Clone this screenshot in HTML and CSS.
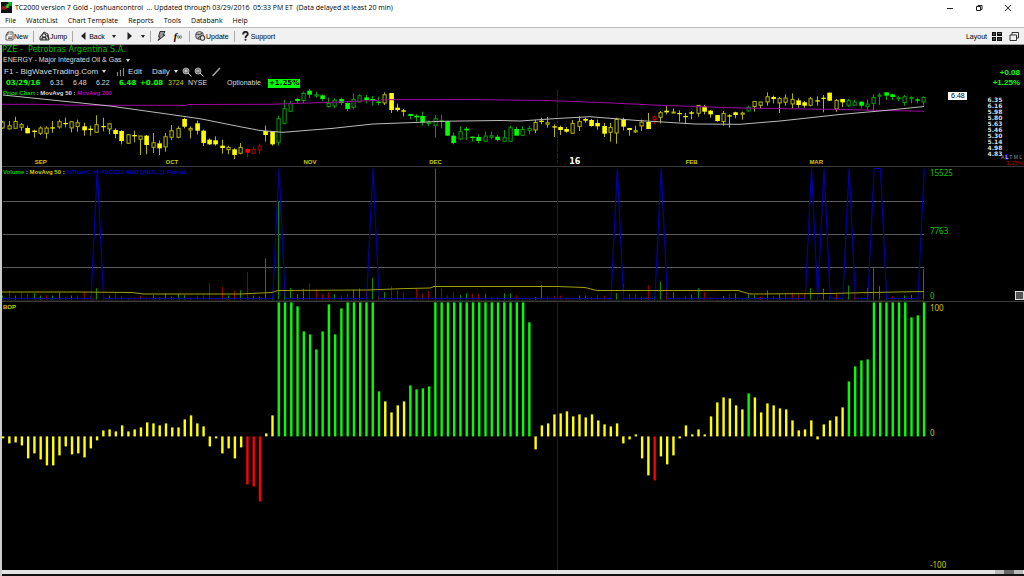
FILE: index.html
```html
<!DOCTYPE html>
<html lang="en">
<head>
<meta charset="utf-8">
<title>TC2000 version 7 Gold</title>
<link rel="stylesheet" href="styles.css">
</head>
<body>
<div class="app">
  <header class="titlebar">
    <svg class="logo" viewBox="0 0 11 11"><rect width="11" height="11" fill="#111"/><path d="M1 8V5h2v3M4 7V4h1v3" fill="none" stroke="#e02020"/><path d="M6 6V3h1v3M8 4V1h2v3" fill="none" stroke="#20e020" stroke-width="1.3"/></svg>
    <h1 class="title">TC2000 version 7 Gold - joshuancontrol &nbsp;... Updated through 03/29/2016 &nbsp;05:33 PM ET &nbsp;(Data delayed at least 20 min)</h1>
    <div class="window-buttons">
      <button aria-label="Minimize"><svg viewBox="0 0 8 8"><path d="M1 4.5h6" /></svg></button>
      <button aria-label="Restore"><svg viewBox="0 0 8 8"><path d="M1.5 2.5h4v4h-4zM3 2.500V1.500h4v4H5.500"/></svg></button>
      <button aria-label="Close"><svg viewBox="0 0 8 8"><path d="M1 1l6 6M7 1l-6 6"/></svg></button>
    </div>
  </header>
  <nav class="menu">
    <button>File</button><button>WatchList</button><button>Chart Template</button><button>Reports</button><button>Tools</button><button>Databank</button><button>Help</button>
  </nav>
  <div class="toolbar">
    <button><svg class="ico" viewBox="0 0 9 10"><path d="M3 1h5v8H1V4zM3 1v3H1M3 6h4M3 7.500h4M4.500 3H7" fill="#fff" stroke="#333" stroke-width=".8"/></svg>New</button>
    <i class="sep"></i>
    <button><svg class="ico wide" viewBox="0 0 11 10"><path d="M1 6l4-5 4 2 1 6H1z" fill="#bbb" stroke="#333"/><circle cx="5" cy="4.500" r="1.800" fill="#fff" stroke="#222"/><path d="M3 9V7l2-1 2 1v2M8 4l2 4" fill="none" stroke="#222"/></svg>Jump</button>
    <i class="sep"></i>
    <button class="back"><svg class="tri" viewBox="0 0 5 8"><path d="M4.500 0v8L0 4z" fill="#222"/></svg>Back</button>
    <button class="caret dark" aria-label="Back history"></button>
    <button class="fwd" aria-label="Forward"><svg class="tri" viewBox="0 0 5 8"><path d="M.5 0v8L5 4z" fill="#222"/></svg></button>
    <button class="caret dark" aria-label="Forward history"></button>
    <i class="sep"></i>
    <button class="bolt" aria-label="Scan"><svg class="ico" viewBox="0 0 9 10"><path d="M3 .5h5L6 4h2L1 9.500 3 6H1.500z" fill="#999" stroke="#222" stroke-width=".9"/></svg></button>
    <button class="fx" aria-label="Formula"><em>f</em><small>∞</small></button>
    <i class="sep"></i>
    <button><svg class="ico wide" viewBox="0 0 11 10"><circle cx="4.500" cy="4.500" r="4" fill="#bbb" stroke="#555"/><path d="M1 4c2-2 3 1 6-2M3 8c0-3 3-2 4-4" stroke="#333" fill="none"/><circle cx="7.500" cy="7" r="2.400" fill="#ddd" stroke="#222"/></svg>Update</button>
    <i class="sep"></i>
    <button class="support"><svg class="ico narrow" viewBox="0 0 7 10"><path d="M1.200 3.500C1 0 6 0 5.700 3.200 5.600 4.800 3.500 4.500 3.500 7" fill="none" stroke="#222" stroke-width="1.900"/><circle cx="3.500" cy="8.800" r="1" fill="#222"/></svg>Support</button>
    <div class="layout">
      <button>Layout<svg class="grid-ico" viewBox="0 0 10 9"><path d="M0 0h4v4H0zM5 0h5v4H5zM0 5h4v4H0zM5 5h5v4H5z" fill="#111"/><path d="M1 2h2M6 1.500h3M1 7h2M6 7h3" stroke="#777"/></svg></button>
      <button aria-label="Windows"><svg class="grid-ico" viewBox="0 0 10 9"><path d="M1 3h6.500v5.500H1zM3 3V.5h6.500V6H7.500" fill="none" stroke="#333"/></svg></button>
    </div>
  </div>

  <main class="work">
    <section class="info">
      <div class="symbol">PZE - &nbsp;Petrobras Argentina S.A.</div>
      <button class="sector">ENERGY - Major Integrated Oil &amp; Gas<i class="caret"></i></button>
      <div class="controls">
        <button>F1 - BigWaveTrading.Com<i class="caret"></i></button>
        <button class="edit"><svg class="bars" viewBox="0 0 8 8"><path d="M1 4v4M4 2v6M7 0v8" stroke="#888" stroke-width="1.200"/></svg>Edit</button>
        <button>Daily<i class="caret"></i></button>
        <span class="tools">
          <button aria-label="Zoom in"><svg viewBox="0 0 10 10"><circle cx="4" cy="4" r="3" fill="#777" stroke="#aaa"/><path d="M2.500 4h3M4 2.500v3M6 6l3.500 3.500" stroke="#ddd"/></svg></button>
          <button aria-label="Zoom out"><svg viewBox="0 0 10 10"><circle cx="4" cy="4" r="3" fill="#777" stroke="#aaa"/><path d="M2.500 4h3M6 6l3.500 3.500" stroke="#ddd"/></svg></button>
          <button class="pen" aria-label="Draw line"><svg viewBox="0 0 10 10"><path d="M1.500 9L9 1" stroke="#aaa" stroke-width="1.400"/></svg></button>
        </span>
      </div>
      <div class="quote">
        <b class="date">03/29/16</b><span class="cell">6.31</span><span class="cell">6.48</span><span class="cell">6.22</span><b class="last">6.48</b><b class="chg">+0.08</b><span class="vol">3724</span><span class="exch">NYSE</span><span class="opt">Optionable</span><b class="badge">+1.25%</b>
      </div>
      <div class="change">+0.08<br>+1.25%</div>
    </section>

    <section class="panes">
      <div class="pane" id="price">
        <div class="legend"><span class="g">Price Chart</span> : MovAvg 50 : <span class="m">MovAvg 200</span></div>
        <span class="month" style="left:3.200%">SEP</span>
        <span class="month" style="left:16%">OCT</span>
        <span class="month" style="left:29.500%">NOV</span>
        <span class="month" style="left:41.800%">DEC</span>
        <span class="month year" style="left:55.500%">16</span>
        <span class="month" style="left:66.900%">FEB</span>
        <span class="month" style="left:79%">MAR</span>
        <span class="tag">6.48</span>
        <div class="scale"><span>6.35</span><span>6.16</span><span>5.98</span><span>5.80</span><span>5.63</span><span>5.46</span><span>5.30</span><span>5.14</span><span>4.98</span><span>4.83</span></div>
        <div class="modes">A <mark>L</mark> T M L</div>
        <div class="pct">3.15%</div>
      </div>
      <div class="pane" id="volume">
        <div class="legend"><span class="g">Volume</span> : <span class="y">MovAvg 50</span> : <span class="b">%True(C &gt;= AVGC10 AND [ABS...]1 Period</span></div>
        <span class="axis top g">15525</span><span class="axis mid g">7763</span><span class="axis low g">0</span>
        <button class="grip" aria-label="Resize pane"></button>
      </div>
      <div class="pane" id="bop">
        <div class="legend"><span class="y">BOP</span></div>
        <span class="axis top y">100</span><span class="axis mid y">0</span><span class="axis low y">-100</span>
      </div>
    </section>
    <div class="scroll"><i class="knob"></i></div>
  </main>
</div>
<script src="charts.js"></script>
</body>
</html>
```
FILE: styles.css
```css
* { box-sizing: border-box; }
body { margin: 0; background: #000; font-family: "Open Sans", "Noto Sans", sans-serif; color: #000; }
button { margin: 0; padding: 0; border: 0; background: none; color: inherit; font: inherit; display: flex; align-items: center; white-space: nowrap; }
svg { display: block; }
.app { min-height: 100vh; display: flex; flex-direction: column; background: #fff; }

.titlebar { height: 15px; display: flex; align-items: center; padding: 0 12px 0 1px; gap: 3px; }
.logo { width: 11px; height: 11px; }
.title { flex: 1; margin: 0; font-size: 7px; font-weight: 400; line-height: 12px; white-space: nowrap; }
.window-buttons { display: flex; gap: 21px; }
.window-buttons svg { width: 8px; height: 8px; fill: none; stroke: #222; stroke-width: 1; }

.menu { height: 12px; display: flex; align-items: center; padding-left: 5px; gap: 10px; font-size: 7px; line-height: 12px; }

.toolbar { height: 18px; display: flex; align-items: center; gap: 5px; padding: 0 5px; background: #f0f0f0; border-top: 1px solid #bbb; border-bottom: 1px solid #999; font-family: "Liberation Sans", sans-serif; font-size: 7px; }
.toolbar button { flex: none; }
.ico { width: 9px; height: 10px; }
.ico.wide { width: 11px; }
.ico.narrow { width: 7px; margin-right: 2px; }
.sep { width: 1px; height: 11px; background: #aaa; }
.tri { width: 5px; height: 8px; }
.back { gap: 3px; padding-left: 3px; }
.fwd { padding: 0 2px 0 6px; }
.caret::after { content: ""; display: block; border: 2px solid transparent; border-top: 3px solid #ddd; border-bottom: 0; margin-left: 4px; }
.caret.dark::after { border-top-color: #222; margin-left: 2px; }
.bolt { padding: 0 3px 0 1px; }
.fx { padding-right: 2px; }
.support { padding-left: 2px; }
.fx em { font-family: "Liberation Serif", serif; font-weight: 700; font-size: 10px; }
.fx small { font-size: 7px; }
.layout { margin-left: auto; display: flex; gap: 7px; }
.layout button { gap: 5px; }
.grid-ico { width: 10px; height: 9px; }

.work { flex: 1; display: flex; flex-direction: column; background: #000; border-left: 2px solid #ccc; color: #ddd; font-family: "Liberation Sans", sans-serif; }
.info { position: relative; height: 43px; font-size: 8px; line-height: 10px; }
.symbol { color: #0b0; font-family: "DejaVu Sans", sans-serif; white-space: nowrap; }
.sector { padding-left: 1px; height: 10px; font-size: 7px; }
.controls { height: 13px; display: flex; align-items: center; padding-left: 2px; gap: 10px; }
.edit { gap: 3px; }
.bars { width: 9px; height: 8px; }
.tools { display: flex; gap: 2px; margin-left: -6px; }
.tools svg { width: 10px; height: 10px; }
.tools .pen { margin-left: 5px; }
.quote { display: flex; align-items: center; height: 10px; padding-left: 4px; font-size: 7px; }
.quote b { color: #0f0; font-family: "DejaVu Sans", sans-serif; }
.date { width: 44px; }
.cell { width: 23px; }
.chg, .quote .last { width: 21px; }
.chg { width: 28px; }
.vol { width: 20px; color: #cc0; }
.exch { width: 39px; }
.opt { width: 41px; }
.quote .badge { background: #0f0; color: #000; padding: 0 1px; line-height: 9px; }
.change { position: absolute; right: 4px; top: 23px; color: #0f0; font-weight: 700; font-size: 8px; text-align: right; }

.panes { flex: 1; display: grid; grid-template-rows: 78fr 135fr 269fr; }
.pane { position: relative; min-height: 0; }
.pane + .pane { border-top: 1px solid #3a3a3a; }
.pane svg { position: absolute; inset: 0; width: 100%; height: 100%; }
.legend { position: absolute; z-index: 1; left: 1px; top: 1px; font: 700 6px/8px "Liberation Sans", sans-serif; white-space: nowrap; }
.g { color: #0c0; }
.y { color: #cc0; }
.m { color: #b000b0; }
.b { color: #0000c8; }
.month { position: absolute; z-index: 1; bottom: 0; color: #cc0; font: 700 6px/8px "Liberation Sans", sans-serif; }
.month.year { color: #fff; font: 700 8px/8px "DejaVu Sans", sans-serif; }
.tag { position: absolute; z-index: 1; left: 92.600%; top: 4px; width: 19px; background: #fff; color: #000; font-size: 7px; line-height: 8px; text-align: center; }
.scale { position: absolute; z-index: 1; right: 11px; top: 9px; width: 36px; display: grid; font: 700 6px/6px "DejaVu Sans", sans-serif; text-align: center; }
.modes { position: absolute; z-index: 1; right: 2px; bottom: 6px; font-size: 5px; line-height: 5px; color: #999; }
.modes mark { background: #00f; color: #fff; }
.pct { position: absolute; z-index: 1; right: 1px; bottom: 0; font-size: 6px; line-height: 6px; color: #c00; }
.axis { position: absolute; z-index: 1; left: 90.800%; font: 8px/10px "Noto Sans", sans-serif; }
.axis.top { top: 1px; }
.axis.mid { top: 48%; transform: translateY(-50%); }
#bop .axis.mid { top: 49%; }
.axis.low { bottom: 0; }
.grip { position: absolute; z-index: 1; right: 0; bottom: 1px; width: 9px; height: 9px; background: #555; border: 1px solid #ddd; }
.scroll { height: 6px; background: #e4e4e4; border-bottom: 2px solid #111; padding-right: 1px; display: flex; justify-content: flex-end; }
.knob { width: 28px; border: solid #bbb; border-width: 0 9px; background: #666; }
```
FILE: charts.js
```js
const NS = "http://www.w3.org/2000/svg";
const X0 = 3.3, STEP = 6.265;
const xAt = i => X0 + STEP * i;

function canvas(id, top, height) {
  const svg = document.createElementNS(NS, "svg");
  svg.setAttribute("viewBox", `2 ${top} 1022 ${height}`);
  svg.setAttribute("preserveAspectRatio", "none");
  document.getElementById(id).prepend(svg);
  return svg;
}
function draw(svg, tag, attrs) {
  const el = document.createElementNS(NS, tag);
  for (const k in attrs) el.setAttribute(k, attrs[k]);
  svg.append(el);
}
const rect = (svg, x, y, width, height, fill) => draw(svg, "rect", { x, y, width, height, fill });
const path = (svg, d, stroke, extra) => draw(svg, "path", { d, stroke, fill: "none", "stroke-width": 1, ...extra });

/* Price candles: high, low, body top, body bottom (thirds of a unit), hollow flag */
const candles = `108,132,110,130,H 108,133,121,133,H 95,131,108,131,H 114,137,118,128,H 122,145,129,145 134,158,137,141 124,150,128,146,H 124,161,128,146,H 108,143,127,130 104,131,109,127,H 98,127,114,117 109,142,109,130,H 104,140,112,126,H 113,152,124,136 122,152,131,135 91,143,118,143,H 98,139,123,126 115,147,115,133,H 130,160,135,147 136,178,138,168 148,176,148,176,H 137,172,150,154 152,210,152,164,H 150,208,152,180 144,204,172,188,H 166,210,175,190 144,200,154,187,H 120,165,136,158,H 124,160,129,158,H 98,130,102,125 124,160,129,136,H 107,148,115,137 134,183,137,174 160,180,164,178 154,182,166,178 164,206,182,189 182,208,186,195,H 190,222,193,210 174,208,186,206,H 190,218,192,203 184,208,192,206,H 176,206,182,196,H
122,170,138,150 138,182,138,178 92,182,100,173,H 45,118,70,116,H 48,80,55,80,H 38,54,42,48 20,54,24,48,H 12,40,17,29 20,38,28,34,H 28,48,31,42 38,68,54,66,H 40,70,44,64,H 38,60,42,54 52,78,54,72 25,73,42,68,H 28,52,31,52,H 30,55,37,45 33,62,42,47 35,60,50,53 22,60,28,55,H 24,84,24,75 56,80,68,75 72,94,76,80 87,103,87,93 88,110,92,97 80,122,93,112 106,124,110,117,H 90,158,100,122,H 90,130,107,111 108,152,108,152 142,178,152,174 124,165,139,163,H 126,165,131,136 155,170,155,159 148,175,156,168 140,170,152,170,H 140,163,151,158,H 150,170,155,165
135,170,157,170,H 122,170,127,170,H 126,152,132,152 124,153,132,152,H 122,148,129,138,H 105,144,111,136,H 98,118,107,110 96,128,112,119,H 118,156,124,127 122,150,126,135 126,143,132,140 105,146,114,146,H 94,138,108,126,H 98,113,102,107 102,125,105,123 104,134,114,124 114,156,123,146 114,170,126,143,H 98,176,102,145,H 98,136,102,125 129,152,129,135 122,144,136,142,H 104,138,110,124,H 84,132,111,132 92,117,95,105,H 78,115,82,98,H 63,88,77,82 70,85,80,85,H 76,110,84,87 84,116,93,96 78,103,82,86 60,95,60,86,H 60,88,65,80 75,98,77,88 90,110,90,108 78,122,84,111,H 88,128,91,94 80,100,82,90
80,104,83,89,H 62,80,66,79,H 48,80,48,66,H 50,70,50,62,H 22,62,34,52,H 32,55,36,42 36,84,39,55,H 28,62,38,53,H 25,70,42,58,H 40,68,46,60 48,68,52,62 36,64,40,62,H 34,62,46,49 30,82,38,41 23,48,23,47 42,80,45,73,H 42,66,42,52 42,66,46,62,H 44,62,50,62,H 50,70,50,62 44,76,56,66,H 28,78,36,57,H 24,60,29,35,H 22,45,22,32 26,45,28,36 32,48,37,42,H 30,62,34,54,H 34,55,36,42,H 38,55,43,47 34,62,36,52,H`.split(/\s+/);

/* Balance of power, in units above or below the zero line */
const bop = [-2,-7,-6,-9,-22,-17,-23,-29,-29,-19,-10,-18,-17,-21,-12,-4,6,7,5,11,5,7,9,14,13,11,13,9,9,17,21,13,10,-10,-2,-17,-12,-22,-11,-48,-50,-65,3,21,
134,134,134,130,105,102,87,105,132,102,128,134,134,134,134,134,45,35,24,31,35,51,47,48,50,134,134,134,134,134,134,134,134,134,134,134,134,134,134,134,114,
-13,11,13,22,23,25,20,22,19,22,16,12,10,13,-7,-3,2,-22,-39,-44,-20,-28,-19,-2,11,2,7,2,20,34,39,38,31,27,43,39,24,33,31,28,27,16,6,7,16,-3,12,16,20,29,
55,70,76,77,134,134,134,134,134,134,119,121,134];

/* Volume bars, in thirds of a unit; negative marks a down day */
const volume = [12,-27,12,-22,-16,19,12,-13,12,22,-7,12,-12,-24,-12,34,-8,12,-22,-10,4,-7,-12,-7,13,-7,19,9,16,13,-4,-12,-13,-49,-4,-38,12,-27,28,-82,12,9,124,10,295,50,35,16,32,-48,-31,-16,-22,16,-12,-15,30,33,-24,65,-10,22,-40,-30,-22,4,-35,-18,-25,393,-35,-12,-22,13,19,-18,-17,17,-8,-8,
19,19,-13,4,4,7,44,-8,-10,-12,-7,-4,12,12,-8,-14,-12,-8,19,-48,-16,-15,7,-43,9,54,-35,22,-6,-12,15,34,-22,-7,-4,10,-18,18,4,15,13,-9,28,-10,16,-20,-21,-16,-16,34,-28,33,-8,-18,4,42,-18,-7,35,94,40,20,-10,4,12,14,-8,91];

function tone(i) {
  if ((i >= 39 && i <= 41) || i === 104) return "red";
  if ((i >= 44 && i <= 60) || (i >= 65 && i <= 84) || i === 119 || i >= 135) return "green";
  return "yellow";
}
const BRIGHT = { red: "#f00", green: "#0f0", yellow: "#ff0" };
const DIM = { red: "#b00000", green: "#00a000", yellow: "#b4b400" };

/* Price pane */
const price = canvas("price", 88, 78);
path(price, "M557.500 90V163", "#222", { "stroke-dasharray": "6 1" });
candles.forEach((c, i) => {
  const [h, l, t, b, hollow] = c.split(",");
  const y = v => 85 + v / 3;
  const x = Math.round(xAt(i)) - 0.5, k = tone(i);
  path(price, `M${x} ${y(h)}V${y(l)}`, DIM[k]);
  const height = Math.max(1.2, (b - t) / 3);
  if (hollow) {
    draw(price, "rect", { x: x - 1.5, y: y(t) + 0.4, width: 3.2, height: Math.max(1, height - 0.8), fill: "#000", stroke: DIM[k], "stroke-width": 1 });
  } else {
    rect(price, x - 2.2, y(t), 4.6, height, BRIGHT[k]);
  }
});
path(price, "M2 104.300H37L80 105.300H187L188 104.500 270 104.300 340 102 390 99.700 470 99.500 545 100.500 600 102.500 665 105.500 740 108 840 109.500 924 111.300", "#a000a0");
path(price, "M3 95L110 106 160 113 200 118.700 240 126.700 260 130.500 283 132.300 333 128.300 373 124 420 122.300 440 121.300 500 120.500 520 121 557 118.500 590 116.700 635 120.300 695 124 740 124.300 780 121 840 114.500 885 110.500 924 106.500", "#bbb");

/* Volume pane */
const vol = canvas("volume", 167, 134);
path(vol, "M3 201.500H924M3 234.500H924M3 267.500H924", "#5c5c5c");
path(vol, "M557.500 168V301M2 300.500H924", "#1c1c1c");
volume.forEach((v, i) => rect(vol, Math.round(xAt(i)) - 1, 299.5 - Math.abs(v) / 3, 1, Math.abs(v) / 3, v < 0 ? "#900000" : "#009000"));
const peaks = [15, 44, 59, 98, 105, 129, 131, 135, 139, 140, 147];
let signal = "M2 298.500";
for (let i = 0; i < 148; i++) signal += `L${xAt(i)} ${peaks.includes(i) ? 168.5 : 298.5}`;
path(vol, signal, "#0000a8", { "stroke-width": 1.2, "stroke-linejoin": "bevel" });
path(vol, "M2 292H80L132 292.500 144 294H240L272 292.500 278 290.500 368 290 400 288.700 430 288 434 286.500H557L585 287.500 597 290.500H738L750 294 830 293.500 870 292.500 924 291.500", "#a0a000");

/* Balance of power pane */
const power = canvas("bop", 302, 268);
path(power, "M557.500 302V570", "#1c1c1c");
bop.forEach((v, i) => rect(power, xAt(i) - 1.4, v > 0 ? 436.4 - v : 436.4, 2.4, Math.abs(v), BRIGHT[tone(i)]));
```
